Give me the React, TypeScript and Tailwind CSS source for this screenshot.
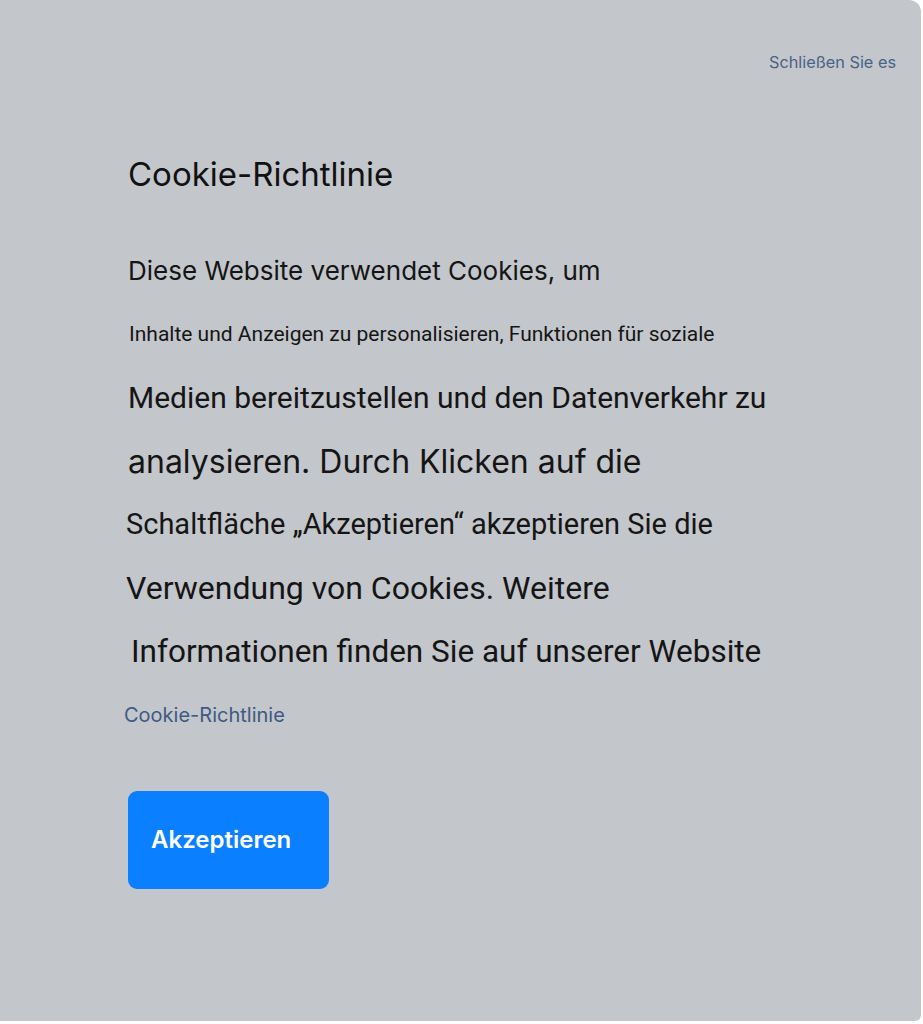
export default function App() {
  const lines: { text: string; cls: string }[] = [
    { text: "Diese Website verwendet Cookies, um", cls: "text-[26px] font-['Inter'] pl-[128px]" },
    { text: "Inhalte und Anzeigen zu personalisieren, Funktionen für soziale", cls: "text-[21px] font-['Roboto'] pl-[129px]" },
    { text: "Medien bereitzustellen und den Datenverkehr zu", cls: "text-[30px] font-['Roboto'] pl-[128px]" },
    { text: "analysieren. Durch Klicken auf die", cls: "text-[32px] font-['Inter'] pl-[128px]" },
    { text: "Schaltfläche „Akzeptieren“ akzeptieren Sie die", cls: "text-[29px] font-['Roboto'] pl-[126px]" },
    { text: "Verwendung von Cookies. Weitere", cls: "text-[32px] font-['Roboto'] pl-[126px]" },
    { text: "Informationen finden Sie auf unserer Website", cls: "text-[31.5px] font-['Roboto'] pl-[131px]" },
  ];

  return (
    <div className="min-h-[1024px] w-[923px] bg-white">
      <div className="h-[1021px] w-[921px] rounded-tr-[12px] rounded-br-[6px] bg-[#c3c6cb] font-['Inter',sans-serif] text-[#111]">
        <div className="flex justify-end pr-[25px] pt-[50px]">
          <button className="text-[16.3px] text-[#4a6285] font-['Inter']">Schließen Sie es</button>
        </div>
        <h1 className="mt-[80px] pl-[128px] text-[33px] leading-[40px] font-normal text-[#111]">
          Cookie-Richtlinie
        </h1>
        <div className="mt-[45px] flex flex-col">
          {lines.map((l) => (
            <p key={l.text} className={`h-[63.5px] leading-[63.5px] whitespace-nowrap text-[#151515] ${l.cls}`}>
              {l.text}
            </p>
          ))}
          <a className="h-[63px] leading-[63px] pl-[124px] text-[20px] text-[#3f5a83] font-['Inter']">Cookie-Richtlinie</a>
        </div>
        <button className="ml-[128px] mt-[44px] h-[98px] w-[201px] rounded-[9px] bg-[#0a7fff] text-left pl-[23px] text-[24px] font-semibold text-white font-['Inter']">
          Akzeptieren
        </button>
      </div>
    </div>
  );
}
